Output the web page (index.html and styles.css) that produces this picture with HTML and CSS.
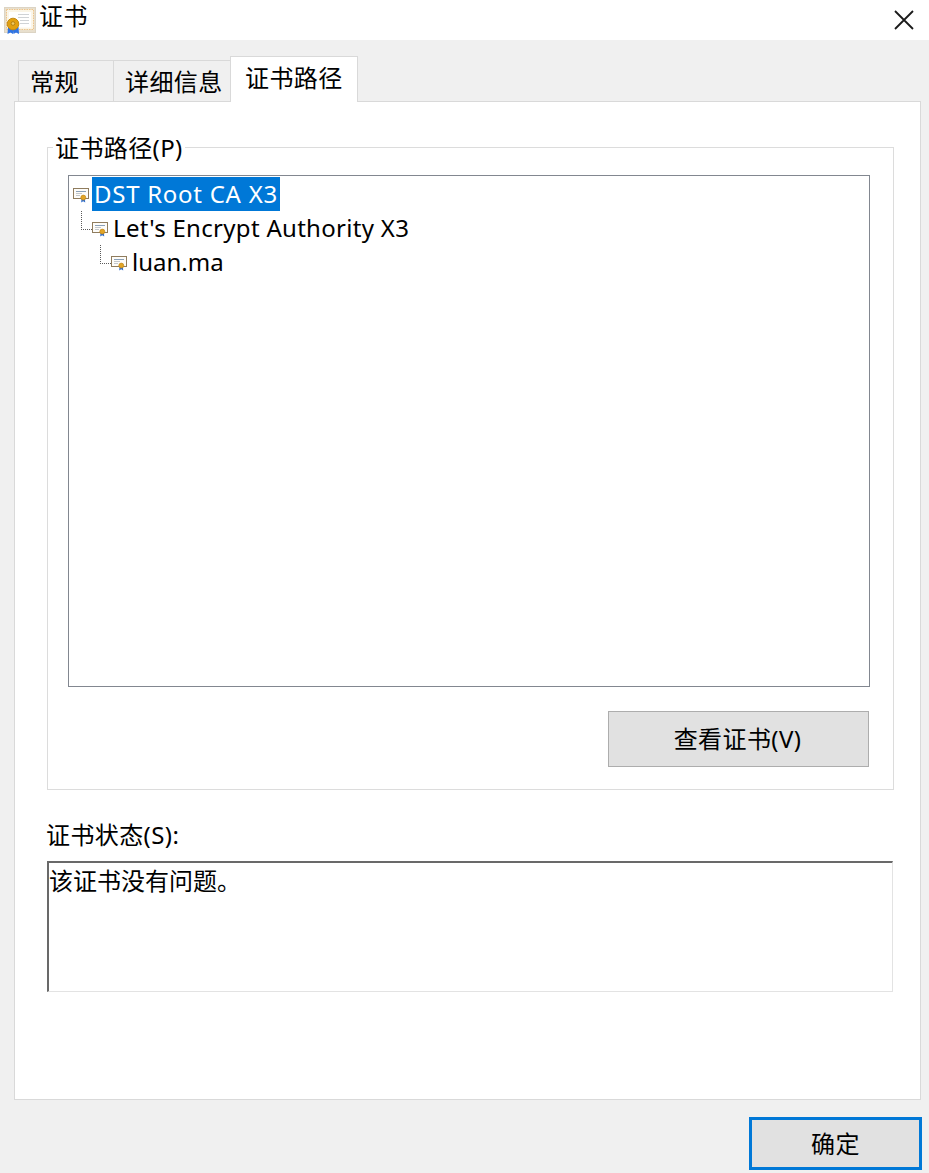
FILE: index.html
```html
<!DOCTYPE html>
<html lang="zh-CN">
<head>
<meta charset="utf-8">
<title>证书</title>
<link rel="stylesheet" href="styles.css">
</head>
<body>
<svg class="defs" width="0" height="0" aria-hidden="true">
  <symbol id="cert-small" viewBox="0 0 16 15">
    <rect x="0.500" y="0.500" width="15" height="10" fill="#fdfcf9" stroke="#8f7c5e"/>
    <path d="M3 3.500h10" stroke="#8aa0b8" stroke-width="1"/>
    <path d="M3 5.500h6M3 7.500h4" stroke="#c4c8cc" stroke-width="1"/>
    <path d="M8.500 10.500l-.3 4 2-1.200 2 1.200-.3-4z" fill="#2f6fd0"/>
    <circle cx="10.300" cy="9.600" r="2.500" fill="#e2a526" stroke="#bd8214" stroke-width=".6"/>
  </symbol>
</svg>

<header class="titlebar">
  <svg class="title-icon" viewBox="0 0 32 27" aria-hidden="true">
    <rect x="0.500" y="0.500" width="31" height="25" fill="#e8dfcd" stroke="#dcd4c4"/>
    <rect x="2.500" y="2.500" width="27" height="20" fill="#fbf5e6" stroke="#eec48a" stroke-dasharray="1.500 1"/>
    <rect x="5" y="5" width="22" height="15.500" fill="#fff"/>
    <path d="M14 7.500h11M14 10.500h11M16 13.500h9M16 16.500h9" stroke="#d0d3d6" stroke-width="1.200"/>
    <path d="M4 20l-.5 7 3-1.500 2.500 1.500.5-6zM9 21l.5 6 2.500-1.500 3 1.500-.5-7z" fill="#2f74e4"/>
    <circle cx="9" cy="17" r="5.800" fill="#e2a010" stroke="#c48a14"/>
    <circle cx="9" cy="16.500" r="1.800" fill="#f2cc62" stroke="#a87610" stroke-width=".8"/>
  </svg>
  <span class="title-text">证书</span>
  <svg class="close" viewBox="0 0 20 20" aria-hidden="true">
    <path d="M1 1l18 18M19 1L1 19" stroke="#1a1a1a" stroke-width="1.800" fill="none"/>
  </svg>
</header>

<div class="tabs">
  <div class="tab tab-general">常规</div>
  <div class="tab tab-details">详细信息</div>
  <div class="tab tab-active">证书路径</div>
</div>

<main class="panel">
  <fieldset class="group">
    <legend class="group-title">证书路径(P)</legend>
    <div class="tree">
      <div class="row row-root">
        <svg class="cert"><use href="#cert-small"/></svg>
        <span class="label label-root selected">DST Root CA X3</span>
      </div>
      <div class="row row-l1">
        <span class="conn"></span>
        <svg class="cert"><use href="#cert-small"/></svg>
        <span class="label label-l1">Let's Encrypt Authority X3</span>
      </div>
      <div class="row row-l2">
        <span class="conn"></span>
        <svg class="cert"><use href="#cert-small"/></svg>
        <span class="label label-l2">luan.ma</span>
      </div>
    </div>
    <div class="group-actions">
      <button class="btn btn-view" type="button">查看证书(V)</button>
    </div>
  </fieldset>
  <div class="status-label">证书状态(S):</div>
  <div class="status-box">该证书没有问题。</div>
</main>

<footer class="footer">
  <button class="btn btn-ok" type="button">确定</button>
</footer>
</body>
</html>
```
FILE: styles.css
```css
* { box-sizing: border-box; }
html, body { margin: 0; padding: 0; }
body {
  width: 929px;
  height: 1173px;
  overflow: hidden;
  background: #f0f0f0;
  color: #000;
  font-family: "Noto Sans", "Noto Sans CJK SC", sans-serif;
  font-size: 24px;
  line-height: 34px;
  letter-spacing: 0.4px;
}
.defs { display: block; height: 0; }

.titlebar {
  display: flex;
  align-items: center;
  height: 40px;
  background: #fff;
  padding: 0 15px 4px 4px;
}
.title-icon { width: 32px; height: 27px; margin-top: 4px; }
.title-text { margin-left: 3px; margin-top: -4px; line-height: 34px; }
.close { width: 20px; height: 20px; margin-left: auto; margin-top: 3px; }

.tabs {
  display: flex;
  align-items: flex-end;
  height: 61px;
  padding: 16px 0 0 18px;
}
.tab {
  height: 41px;
  background: #f0f0f0;
  border: 1px solid #d9d9d9;
  border-bottom: 0;
  padding: 4px 0 0 11px;
  line-height: 34px;
}
.tab-general { width: 95px; border-right: 0; }
.tab-details { width: 117px; border-right: 0; padding-left: 11px; }
.tab-active {
  position: relative;
  z-index: 1;
  width: 128px;
  height: 46px;
  margin-bottom: -1px;
  background: #fff;
  padding: 4px 0 0 14px;
}

.panel {
  width: 907px;
  height: 999px;
  margin-left: 14px;
  background: #fff;
  border: 1px solid #d9d9d9;
  padding: 29px 27px 0 32px;
}
.group {
  display: block;
  width: 847px;
  height: 659px;
  margin: 0;
  min-width: 0;
  padding: 12px 23px 0 20px;
  border: 1px solid #dcdcdc;
}
.group-title { margin-left: -15px; padding: 0 2px; height: 32px; line-height: 34px; }

.tree {
  width: 802px;
  height: 512px;
  background: #fff;
  border: 1px solid #828790;
  padding-top: 1px;
}
.row { display: flex; align-items: center; height: 34px; }
.row-root { padding-left: 4px; }
.row-l1 { padding-left: 12px; }
.row-l2 { padding-left: 31px; }
.conn {
  align-self: flex-start;
  width: 11px;
  height: 19px;
  border-left: 1px dotted #5a5a5a;
  border-bottom: 1px dotted #5a5a5a;
}
.cert { width: 16px; height: 15px; flex: none; margin-top: 3px; }
.label { padding: 0 2px; margin-left: 3px; line-height: 34px; white-space: nowrap; }
.label-root { letter-spacing: 0.73px; }
.label-l1 { letter-spacing: 0.3px; }
.label-l2 { letter-spacing: 0; }
.selected { background: #0078d7; color: #fff; }

.group-actions { display: flex; justify-content: flex-end; padding: 24px 1px 0 0; }
.btn {
  font: inherit;
  letter-spacing: inherit;
  line-height: 34px;
  color: #000;
  background: #e1e1e1;
  padding: 0;
}
.btn-view { width: 261px; height: 56px; border: 1px solid #adadad; padding-right: 2px; }

.status-label { margin-top: 28px; margin-left: -1px; height: 34px; }
.status-box {
  width: 846px;
  height: 131px;
  margin-top: 9px;
  border-top: 2px solid #696969;
  border-left: 2px solid #696969;
  border-right: 1px solid #e3e3e3;
  border-bottom: 1px solid #e3e3e3;
  padding: 1px 0 0 0;
  letter-spacing: 0;
}

.footer {
  display: flex;
  justify-content: flex-end;
  padding: 17px 7px 0 0;
}
.btn-ok { width: 173px; height: 53px; border: 3px solid #0078d7; }
```
